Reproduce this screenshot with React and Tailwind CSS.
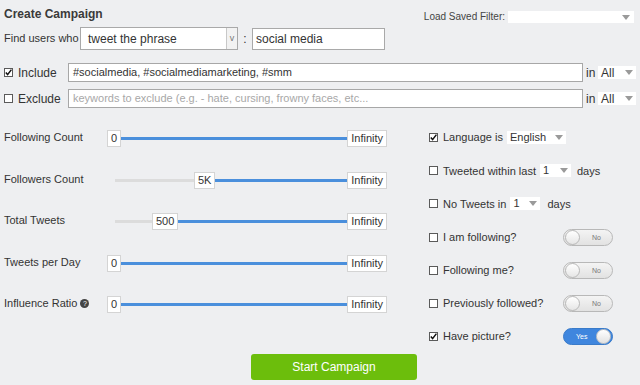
import React from 'react';

const Arrow = () => (
  <svg width="8" height="5" viewBox="0 0 8 5" className="shrink-0">
    <path d="M0 0 L8 0 L4 5 Z" fill="#9a9a9a" />
  </svg>
);

const MiniSelect = ({ value, className }) => (
  <div className={`h-[13px] bg-white flex items-center justify-between pl-[3px] pr-[3px] text-[11px] leading-none ${className}`}>
    <span>{value}</span>
    <Arrow />
  </div>
);

const Check = ({ checked }) => (
  <div className="w-[9px] h-[9px] border border-[#5a5a5a] bg-white shrink-0 relative">
    {checked && (
      <svg width="9" height="9" viewBox="0 0 9 9" className="absolute -top-px -left-px">
        <path d="M1.8 4.6 L3.6 6.6 L7.4 1.6" stroke="#111" strokeWidth="1.5" fill="none" />
      </svg>
    )}
  </div>
);

const Toggle = ({ on }) =>
  on ? (
    <div className="w-[50px] h-[17px] rounded-full bg-[#3f86de] border border-[#3a7bc9] flex items-center justify-between pl-[12px] pr-px">
      <span className="text-[7px] text-white leading-none">Yes</span>
      <div className="w-[15px] h-[15px] rounded-full bg-gradient-to-b from-white to-[#e2e2e2] border border-[#c4c4c4]" />
    </div>
  ) : (
    <div className="w-[50px] h-[17px] rounded-full bg-gradient-to-b from-[#f4f4f4] to-[#e2e2e2] border border-[#b8b8b8] flex items-center justify-between pl-px pr-[11px]">
      <div className="w-[15px] h-[15px] rounded-full bg-gradient-to-b from-white to-[#e6e6e6] border border-[#b8b8b8]" />
      <span className="text-[7px] text-[#777] leading-none">No</span>
    </div>
  );

const Box = ({ children }) => (
  <div className="h-[17px] px-[3px] bg-white border border-[#d4d4d4] flex items-center text-[11px] leading-none shrink-0">
    {children}
  </div>
);

const Slider = ({ min, grey }) => (
  <div className="w-[280px] flex items-center">
    {grey ? (
      <>
        <div className="w-[8px]" />
        <div className="h-[3px] bg-[#dcdcdc]" style={{ width: grey }} />
      </>
    ) : null}
    <Box>{min}</Box>
    <div className="flex-1 h-[3px] bg-[#4a8fdc]" />
    <Box>Infinity</Box>
  </div>
);

const sliders = [
  { label: 'Following Count', min: '0' },
  { label: 'Followers Count', min: '5K', grey: 79 },
  { label: 'Total Tweets', min: '500', grey: 37 },
  { label: 'Tweets per Day', min: '0' },
  { label: 'Influence Ratio', min: '0', help: true },
];

export default function App() {
  return (
    <div
      className="w-[640px] h-[385px] bg-[#eeeff1] text-[#333] text-[11px] overflow-hidden"
      style={{ fontFamily: '"Liberation Sans", Arial, sans-serif' }}
    >
      {/* header */}
      <div className="h-[27px] flex justify-between pl-[4px] pr-[6px]">
        <div className="pt-[5px] text-[12px] font-bold text-[#3a3a3a]">Create Campaign</div>
        <div className="pt-[11px] flex items-start gap-[3px]">
          <span className="text-[10px] leading-[12px] text-[#444]">Load Saved Filter:</span>
          <div className="w-[126px] h-[12px] bg-white flex items-center justify-end pr-[4px]">
            <Arrow />
          </div>
        </div>
      </div>

      {/* find users */}
      <div className="h-[23px] flex items-center pl-[4px]">
        <span className="w-[76px]">Find users who</span>
        <div className="w-[158px] h-[23px] bg-white border border-[#a9a9a9] flex items-center justify-between text-[12px]">
          <span className="pl-[7px]">tweet the phrase</span>
          <div className="w-[11px] h-[21px] border-l border-[#c8c8c8] bg-[#f2f2f2] flex items-center justify-center text-[9px] text-[#777]">v</div>
        </div>
        <span className="w-[14px] text-center text-[12px]">:</span>
        <div className="w-[133px] h-[22px] bg-white border border-[#a9a9a9] flex items-center pl-[3px] text-[12px]">social media</div>
      </div>

      {/* include / exclude */}
      <div className="mt-[13px] flex flex-col gap-[7px] pl-[4px]">
        {[
          { label: 'Include', checked: true, text: '#socialmedia, #socialmediamarketing, #smm' },
          { label: 'Exclude', checked: false, placeholder: 'keywords to exclude (e.g. - hate, cursing, frowny faces, etc...' },
        ].map((r) => (
          <div key={r.label} className="h-[19px] flex items-center">
            <Check checked={r.checked} />
            <span className="ml-[5px] w-[50px] text-[12px]">{r.label}</span>
            <div className="w-[515px] h-[19px] bg-white border border-[#a7a7a7] flex items-center pl-[4px] text-[11px]">
              {r.text ? r.text : <span className="text-[#a8a8a8]">{r.placeholder}</span>}
            </div>
            <span className="ml-[3px] w-[12px] text-[12px]">in</span>
            <MiniSelect value="All" className="w-[38px] text-[12px]" />
          </div>
        ))}
      </div>

      {/* filters */}
      <div className="mt-[10px] flex">
        <div className="pl-[4px] w-[429px] flex flex-col">
          {sliders.map((s) => (
            <div key={s.label} className="h-[41.5px] flex items-center">
              <div className="w-[103px] flex items-center gap-[3px] -mt-[3px]">
                <span>{s.label}</span>
                {s.help && (
                  <span className="w-[9px] h-[9px] rounded-full bg-[#444] text-white text-[7px] leading-none flex items-center justify-center">?</span>
                )}
              </div>
              <Slider min={s.min} grey={s.grey} />
            </div>
          ))}
        </div>

        <div className="pt-[3px] flex flex-col">
          <div className="h-[33.2px] flex items-center">
            <Check checked />
            <span className="ml-[5px] mr-[4px]">Language is</span>
            <MiniSelect value="English" className="w-[59px]" />
          </div>
          <div className="h-[33.2px] flex items-center">
            <Check />
            <span className="ml-[5px] mr-[4px]">Tweeted within last</span>
            <MiniSelect value="1" className="w-[31px]" />
            <span className="ml-[6px]">days</span>
          </div>
          <div className="h-[33.2px] flex items-center">
            <Check />
            <span className="ml-[5px] mr-[4px]">No Tweets in</span>
            <MiniSelect value="1" className="w-[30px]" />
            <span className="ml-[7px]">days</span>
          </div>
          {[
            ['I am following?', false],
            ['Following me?', false],
            ['Previously followed?', false],
            ['Have picture?', true],
          ].map(([label, on]) => (
            <div key={label} className="h-[33.2px] flex items-center">
              <div className="w-[134px] flex items-center">
                <Check checked={on} />
                <span className="ml-[5px]">{label}</span>
              </div>
              <Toggle on={on} />
            </div>
          ))}
        </div>
      </div>

      <div className="mt-[1px] ml-[251px] w-[166px] h-[26px] rounded-[3px] bg-[#6cbe0c] text-white text-[12px] flex items-center justify-center">
        Start Campaign
      </div>
    </div>
  );
}
